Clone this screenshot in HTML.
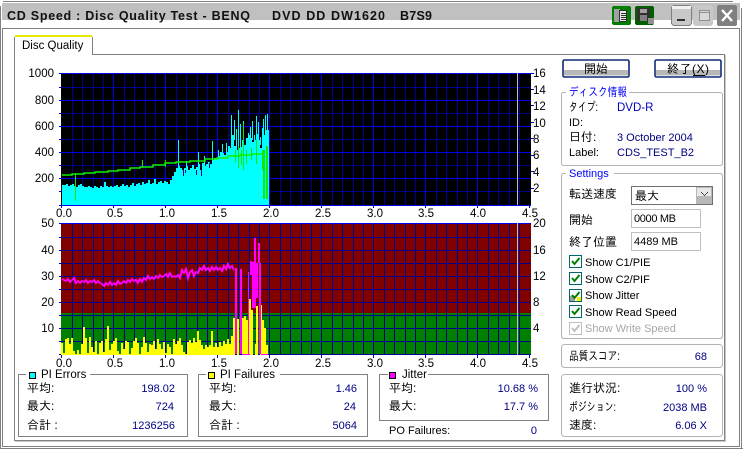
<!DOCTYPE html>
<html><head><meta charset="utf-8"><style>
html,body{margin:0;padding:0;background:#fff;width:743px;height:449px;overflow:hidden}
svg{display:block}
text{font-family:"Liberation Sans","IPAGothic","Noto Sans CJK JP",sans-serif;font-size:11px;fill:#000}
.j{font-size:12px}
.n{font-size:11.5px}
.v{fill:#000080}
.b{fill:#0000ff}
.g{fill:#a8a8a8}
.e{text-anchor:end}
.m{text-anchor:middle}
.t{font-family:"Liberation Sans",sans-serif;font-weight:bold;font-size:12.5px;fill:#111}
</style></head><body>
<svg width="743" height="449" viewBox="0 0 743 449" xmlns="http://www.w3.org/2000/svg">
<g shape-rendering="crispEdges">
<rect width="743" height="449" fill="#fff"/>
<!-- window frame -->
<path d="M3 1.5H733M0.5 6V449M741.5 8V449M1 448.5H743" stroke="#808080" fill="none"/>
<rect x="2" y="3" width="738" height="17" fill="#c0c0c0"/>
<path d="M2.5 28V447M2 28.5H740M739.5 28V447M2 446.5H740" stroke="#808080" fill="none"/>
<!-- tab panel -->
<path d="M14.5 54V440.5H724.5V54.5H92" stroke="#808080" fill="none"/>
<path d="M15 441.5H725.5V55" stroke="#c8c8c8" fill="none"/>
<path d="M14.5 54V37M92.5 37V54" stroke="#808080" fill="none"/>
<rect x="15" y="35" width="77" height="2" fill="#e8e800"/>
<rect x="15" y="37" width="77" height="18" fill="#fff"/>
<!-- top chart -->
<rect x="61" y="73" width="470" height="132" fill="#000"/>
<path d="M72.500 73V205M82.500 73V205M93.500 73V205M103.500 73V205M124.500 73V205M134.500 73V205M145.500 73V205M155.500 73V205M176.500 73V205M186.500 73V205M197.500 73V205M207.500 73V205M228.500 73V205M238.500 73V205M249.500 73V205M259.500 73V205M280.500 73V205M290.500 73V205M301.500 73V205M311.500 73V205M332.500 73V205M342.500 73V205M353.500 73V205M363.500 73V205M384.500 73V205M394.500 73V205M405.500 73V205M415.500 73V205M436.500 73V205M446.500 73V205M457.500 73V205M467.500 73V205M488.500 73V205M498.500 73V205M509.500 73V205M519.500 73V205M61 87.500H531M61 113.500H531M61 139.500H531M61 165.500H531M61 191.500H531" stroke="#000090" fill="none"/>
<path d="M113.500 73V205M165.500 73V205M217.500 73V205M269.500 73V205M321.500 73V205M373.500 73V205M425.500 73V205M477.500 73V205M61 73.500H531M61 100.500H531M61 126.500H531M61 152.500H531M61 178.500H531M61 205.500H531" stroke="#0000f0" fill="none"/>
<path d="M517.500 73V205" stroke="#c0c0c0"/>
<path d="M59 73.500H61M59 87.500H61M59 100.500H61M59 113.500H61M59 126.500H61M59 139.500H61M59 152.500H61M59 165.500H61M59 178.500H61M59 191.500H61M59 205.500H61M531 73.500H534M531 89.500H534M531 105.500H534M531 122.500H534M531 138.500H534M531 155.500H534M531 171.500H534M531 188.500H534M61.500 205V208M113.500 205V208M165.500 205V208M217.500 205V208M269.500 205V208M321.500 205V208M373.500 205V208M425.500 205V208M477.500 205V208M529.500 205V208" stroke="#0000c0" fill="none"/>
<!-- cyan bars -->
<path stroke="#00ffff" stroke-width="2" fill="none" d="M63 205V185M65 205V185M67 205V184M69 205V186M71 205V185M73 205V184M75 205V186M77 205V187M79 205V185M81 205V184M83 205V186M85 205V187M87 205V187M89 205V186M91 205V187M93 205V188M95 205V186M97 205V187M99 205V188M101 205V186M103 205V187M105 205V182M107 205V186M109 205V187M111 205V186M113 205V187M115 205V186M117 205V185M119 205V187M121 205V186M123 205V184M125 205V186M127 205V185M129 205V187M131 205V185M133 205V183M135 205V186M137 205V184M139 205V183M141 205V185M143 205V182M145 205V184M147 205V183M149 205V180M151 205V184M153 205V183M155 205V179M157 205V184M159 205V182M161 205V181M163 205V183M165 205V181M167 205V182M169 205V184M171 205V180M173 205V176M175 205V172M177 205V168M179 205V166M181 205V168M183 205V170M185 205V168M187 205V166M189 205V170M191 205V168M193 205V165M195 205V169M197 205V167M199 205V164M201 205V170M203 205V163M205 205V166M207 205V164M209 205V162M211 205V164M213 205V160M215 205V158M217 205V158M219 205V156M221 205V152M223 205V153M225 205V155M227 205V152M229 205V146M231 205V148M233 205V135M235 205V146M237 205V150M239 205V148M241 205V147M243 205V140M245 205V145M247 205V138M249 205V135M251 205V138M253 205V142M255 205V140M257 205V134M259 205V140M261 205V148M263 205V128M265 205V135M267 205V130"/>
<path stroke="#00ffff" fill="none" d="M178.500 166V140M186.500 170V161M198.500 170V152M204.500 166V156M212.500 160V141M218.500 158V150M222.500 155V144M226.500 155V143M231.500 150V115M234.500 140V120M236.500 150V129M238.500 150V110M240.500 150V124M243.500 145V121M246.500 145V140M248.500 140V133M250.500 140V127M252.500 140V121M254.500 140V135M256.500 140V116M258.500 140V122M260.500 145V137M263.500 130V119M265.500 135V115M267.500 130V114M268.500 205V130"/>
<path stroke="#0000a0" fill="none" d="M183.500 170V176M196.500 170V175M201.500 170V176M209.500 163V168M185.500 170V173"/>
</g>
<!-- green speed -->
<path stroke="#10f000" stroke-width="1.500" fill="none" d="M62 175H72V174H84V173H95V172H108V171H118V170H130V168H140V167H153V165H165V163H176V162H190V161H205V159H217V158H228V156H240V155H252V154H262"/>
<g shape-rendering="crispEdges">
<path stroke="#10e800" fill="none" d="M75.500 173V201M142.500 160V167M165.500 160V167M235.500 150V162M238.500 146V168M241.500 150V165M243.500 124V170M246.500 150V164M251.500 148V160M256.500 140V164M262.500 150V170"/>
<path stroke="#10e800" stroke-width="2" fill="none" d="M264 150V199M267 146V199"/>
<!-- bottom chart -->
<rect x="61" y="223" width="470" height="90" fill="#800000"/>
<rect x="61" y="313" width="470" height="42" fill="#008000"/>
<path d="M72.500 223V355M82.500 223V355M93.500 223V355M103.500 223V355M113.500 223V355M124.500 223V355M134.500 223V355M145.500 223V355M155.500 223V355M165.500 223V355M176.500 223V355M186.500 223V355M197.500 223V355M207.500 223V355M217.500 223V355M228.500 223V355M238.500 223V355M249.500 223V355M259.500 223V355M269.500 223V355M280.500 223V355M290.500 223V355M301.500 223V355M311.500 223V355M321.500 223V355M332.500 223V355M342.500 223V355M353.500 223V355M363.500 223V355M373.500 223V355M384.500 223V355M394.500 223V355M405.500 223V355M415.500 223V355M425.500 223V355M436.500 223V355M446.500 223V355M457.500 223V355M467.500 223V355M477.500 223V355M488.500 223V355M498.500 223V355M509.500 223V355M519.500 223V355M61 237.500H531M61 250.500H531M61 263.500H531M61 276.500H531M61 289.500H531M61 302.500H531M61 315.500H531M61 328.500H531M61 341.500H531M61 354.500H531" stroke="#000090" fill="none"/>
<path d="M61 223.500H531" stroke="#0000f0"/>
<path d="M517.500 223V355" stroke="#c0c0c0"/>
<path d="M59 223.500H61M59 237.500H61M59 250.500H61M59 263.500H61M59 276.500H61M59 289.500H61M59 302.500H61M59 315.500H61M59 328.500H61M59 341.500H61M59 354.500H61M61.500 355V358M113.500 355V358M165.500 355V358M217.500 355V358M269.500 355V358M321.500 355V358M373.500 355V358M425.500 355V358M477.500 355V358M529.500 355V358" stroke="#0000c0" fill="none"/>
<!-- yellow bars -->
<path stroke="#ffff00" stroke-width="2" fill="none" d="M62 355V343M64 355V353M66 355V339M68 355V338M70 355V344M72 355V338M74 355V351M76 355V354M78 355V350M80 355V354M82 355V344M84 355V327M86 355V338M88 355V353M90 355V337M92 355V347M94 355V352M96 355V341M98 355V354M100 355V343M102 355V341M104 355V352M106 355V339M108 355V326M110 355V350M112 355V344M114 355V341M116 355V338M118 355V351M120 355V354M122 355V343M124 355V349M126 355V341M128 355V342M130 355V354M132 355V348M134 355V341M136 355V338M138 355V343M140 355V354M142 355V347M144 355V337M146 355V343M148 355V352M150 355V344M152 355V345M154 355V341M156 355V349M158 355V339M160 355V344M162 355V349M164 355V342M166 355V353M168 355V344M170 355V347M172 355V354M174 355V339M176 355V344M178 355V341M180 355V338M182 355V345M184 355V352M186 355V354M188 355V342M190 355V340M192 355V343M194 355V338M196 355V342M198 355V331M200 355V340M202 355V345M204 355V349M206 355V345M208 355V347M210 355V345M212 355V331M214 355V347M216 355V343M218 355V347M220 355V342M222 355V346M224 355V341M226 355V344M228 355V339M230 355V344M232 355V336M234 355V318M238 355V319M243 355V318M245 355V316M247 355V320M250 355V299M252 355V310M256 355V344M257 355V306M261 355V305M263 355V320M265 355V328M267 355V345"/>
<!-- magenta -->
<polyline fill="none" stroke="#ff00ff" stroke-width="2" points="62,279 64,280 66,281 68,279 70,282 72,280 74,278 76,283 78,281 80,283 82,281 84,282 86,280 88,283 90,281 92,282 94,280 96,283 98,281 100,283 102,284 104,286 106,283 108,285 110,282 112,285 114,283 116,285 118,281 120,284 122,283 124,281 126,283 128,280 130,282 132,279 134,281 136,280 138,283 140,279 142,282 144,278 146,280 148,276 150,279 152,277 154,279 156,276 158,278 160,275 162,277 164,276 166,274 168,277 170,273 172,277 174,276 176,277 178,275 180,278 182,270 184,273 186,269 188,278 190,272 192,270 194,276 196,272 198,273 200,268 202,270 204,266 206,270 208,268 210,271 212,267 214,270 216,267 218,270 220,268 222,271 224,266 226,269 228,264 230,268 232,266 234,270"/>
<path fill="none" stroke="#ff00ff" stroke-width="2" d="M236 268V354M241 269V354M251 261V275M253 262V308M255 238V308M257 263V298M259 243V263M260 263V354"/>
<path fill="none" stroke="#ff00ff" d="M242 354.500H250M261 354.500H268M248.500 272V354"/>
<!-- group boxes bottom -->
<path d="M26 374.500H18.500V436.500H187.500V374.500H90" stroke="#808080" fill="none"/>
<rect x="29.500" y="372.500" width="6" height="6" fill="#00ffff" stroke="#000"/>
<path d="M206 374.500H198.500V436.500H367.500V374.500H280" stroke="#808080" fill="none"/>
<rect x="208.500" y="372.500" width="6" height="6" fill="#ffff00" stroke="#000"/>
<path d="M388 374.500H379.500V420.500H548.500V374.500H428" stroke="#808080" fill="none"/>
<rect x="389.500" y="372.500" width="6" height="6" fill="#ff00ff" stroke="#000"/>
</g>
<!-- buttons -->
<rect x="563" y="60" width="66" height="17" rx="1.500" fill="#fff" stroke="#102878" stroke-width="1.600"/>
<rect x="564" y="70" width="64" height="5.500" fill="#b8b8b8" shape-rendering="crispEdges"/>
<rect x="655" y="60" width="66" height="17" rx="1.500" fill="#fff" stroke="#102878" stroke-width="1.600"/>
<rect x="656" y="70" width="64" height="5.500" fill="#b8b8b8" shape-rendering="crispEdges"/>
<!-- right group boxes -->
<g fill="none" stroke="#b4b4b4">
<path d="M566 92.500H563Q561.500 92.500 561.500 95V163Q561.500 165.500 564 165.500H720Q722.500 165.500 722.500 163V95Q722.500 92.500 720 92.500H629"/>
<path d="M566 173.500H564Q561.500 173.500 561.500 176V336Q561.500 338.500 564 338.500H720Q722.500 338.500 722.500 336V176Q722.500 173.500 720 173.500H614"/>
<rect x="561.500" y="344.500" width="161" height="23" rx="3"/>
<rect x="561.500" y="374.500" width="161" height="62" rx="3"/>
</g>
<g shape-rendering="crispEdges">
<!-- combo / inputs -->
<rect x="631.500" y="186.500" width="81" height="18" fill="#fff" stroke="#707070"/>
<rect x="696" y="187" width="16" height="17" fill="#b8b8b8"/>
<rect x="697" y="188" width="14" height="8" fill="#e8e8e8"/>
<path d="M701 192h1v1h1v1h1v1h1v-1h1v-1h1v-1h1v1h-1v1h-1v1h-1v1h-1v-1h-1v-1h-1v-1h-1z" fill="#404040"/>
<rect x="631.500" y="209.500" width="69" height="18" fill="#fff" stroke="#c0c0c0"/>
<rect x="631.500" y="232.500" width="69" height="18" fill="#fff" stroke="#c0c0c0"/>
<!-- checkboxes -->
<rect x="569.500" y="255.500" width="12" height="12" fill="#fff" stroke="#006868"/>
<rect x="569.500" y="272.500" width="12" height="12" fill="#fff" stroke="#006868"/>
<rect x="569.500" y="289.500" width="12" height="12" fill="#fff" stroke="#006868"/>
<rect x="570" y="296" width="5" height="5" fill="#a0a0a0"/>
<rect x="577" y="297" width="4" height="4" fill="#f0f000"/>
<rect x="569.500" y="305.500" width="12" height="12" fill="#fff" stroke="#006868"/>
<rect x="569.500" y="322.500" width="12" height="12" fill="#fff" stroke="#c0c0c0"/>
</g>
<g fill="none" stroke-width="2">
<path d="M572 261l2.500 3 5-6" stroke="#008000"/>
<path d="M572 278l2.500 3 5-6" stroke="#008000"/>
<path d="M572 295l2.500 3 5-6" stroke="#008000"/>
<path d="M572 311l2.500 3 5-6" stroke="#008000"/>
<path d="M572 328l2.500 3 5-6" stroke="#c0c0c0"/>
</g>
<!-- title icons -->
<g shape-rendering="crispEdges">
<rect x="612" y="6" width="19" height="19" rx="2" fill="#008000"/>
<rect x="614" y="9" width="6" height="13" fill="#a0a0a0"/>
<rect x="619.500" y="10.500" width="7" height="11" fill="#e8e8e8" stroke="#303030"/>
<path d="M621 13.500h5M621 15.500h5M621 17.500h5M621 19.500h5" stroke="#303030"/>
<rect x="635" y="6" width="19" height="19" rx="2" fill="#006000"/>
<rect x="637" y="8" width="13" height="13" fill="#303030"/>
<rect x="640" y="9" width="7" height="4" fill="#a0a0a0"/>
<rect x="640" y="15" width="7" height="6" fill="#808080"/>
<rect x="648" y="18" width="6" height="6" fill="#909090"/>
<rect x="671.500" y="5.500" width="20" height="20" rx="3" fill="#c8c8c8" stroke="#808080"/>
<rect x="672" y="6" width="19" height="3" fill="#f0f0f0"/>
<rect x="677" y="19" width="8" height="2" fill="#303030"/>
<rect x="693" y="5" width="20" height="21" rx="3" fill="#c8c8c8"/>
<rect x="699.500" y="10.500" width="10" height="10" fill="#d8d8d8" stroke="#909090"/>
<path d="M699 12.500h11" stroke="#909090"/>
<rect x="717" y="5" width="20" height="21" rx="2" fill="#808080"/>
</g>
<path d="M722 10l10 11M732 10l-10 11" stroke="#fff" stroke-width="2.400"/>
<!-- title text -->
<text class="t" x="7" y="20" textLength="243" lengthAdjust="spacing">CD Speed : Disc Quality Test - BENQ</text>
<text class="t" x="272" y="20" textLength="113" lengthAdjust="spacing">DVD DD DW1620</text>
<text class="t" x="400" y="20" textLength="32" lengthAdjust="spacing">B7S9</text>
<text x="22" y="49" style="font-size:11.5px">Disc Quality</text>
<!-- axis labels -->
<g>
<text class="n e" x="54" y="77">1000</text>
<text class="n e" x="54" y="104">800</text>
<text class="n e" x="54" y="130">600</text>
<text class="n e" x="54" y="156">400</text>
<text class="n e" x="54" y="182">200</text>
<text class="n" x="533" y="77">16</text>
<text class="n" x="533" y="94">14</text>
<text class="n" x="533" y="110">12</text>
<text class="n" x="533" y="127">10</text>
<text class="n" x="533" y="143">8</text>
<text class="n" x="533" y="159">6</text>
<text class="n" x="533" y="176">4</text>
<text class="n" x="533" y="192">2</text>
<text class="n m" x="64" y="217">0.0</text>
<text class="n m" x="115" y="217">0.5</text>
<text class="n m" x="167" y="217">1.0</text>
<text class="n m" x="219" y="217">1.5</text>
<text class="n m" x="271" y="217">2.0</text>
<text class="n m" x="323" y="217">2.5</text>
<text class="n m" x="375" y="217">3.0</text>
<text class="n m" x="426" y="217">3.5</text>
<text class="n m" x="478" y="217">4.0</text>
<text class="n m" x="530" y="217">4.5</text>
<text class="n e" x="54" y="227">50</text>
<text class="n e" x="54" y="254">40</text>
<text class="n e" x="54" y="280">30</text>
<text class="n e" x="54" y="306">20</text>
<text class="n e" x="54" y="332">10</text>
<text class="n" x="533" y="227">20</text>
<text class="n" x="533" y="254">16</text>
<text class="n" x="533" y="280">12</text>
<text class="n" x="533" y="306">8</text>
<text class="n" x="533" y="332">4</text>
<text class="n m" x="64" y="367">0.0</text>
<text class="n m" x="115" y="367">0.5</text>
<text class="n m" x="167" y="367">1.0</text>
<text class="n m" x="219" y="367">1.5</text>
<text class="n m" x="271" y="367">2.0</text>
<text class="n m" x="323" y="367">2.5</text>
<text class="n m" x="375" y="367">3.0</text>
<text class="n m" x="426" y="367">3.5</text>
<text class="n m" x="478" y="367">4.0</text>
<text class="n m" x="530" y="367">4.5</text>
</g>
<!-- stat boxes -->
<text x="41" y="378" style="font-size:11.5px">PI Errors</text>
<text class="j" x="27" y="392">平均:</text><text class="v e" x="175" y="392">198.02</text>
<text class="j" x="27" y="410">最大:</text><text class="v e" x="174" y="410">724</text>
<text class="j" x="27" y="429">合計 :</text><text class="v e" x="175" y="429">1236256</text>
<text x="220" y="378" style="font-size:11.5px">PI Failures</text>
<text class="j" x="209" y="392">平均:</text><text class="v e" x="357" y="392">1.46</text>
<text class="j" x="209" y="410">最大:</text><text class="v e" x="356" y="410">24</text>
<text class="j" x="209" y="429">合計 :</text><text class="v e" x="357" y="429">5064</text>
<text x="402" y="378" style="font-size:11.5px">Jitter</text>
<text class="j" x="389" y="392">平均:</text><text class="v e" x="538" y="392">10.68 %</text>
<text class="j" x="389" y="410">最大:</text><text class="v e" x="538" y="410">17.7 %</text>
<text x="389" y="434">PO Failures:</text><text class="v e" x="537" y="434">0</text>
<!-- right panel -->
<text class="j m" x="596" y="73">開始</text>
<text class="j" x="667" y="73" textLength="42">終了(X)</text>
<path d="M693 75.500H705" stroke="#000" shape-rendering="crispEdges"/>
<text class="j b" x="569" y="96" textLength="58" lengthAdjust="spacingAndGlyphs">ディスク情報</text>
<text class="j" x="569" y="111" textLength="29" lengthAdjust="spacingAndGlyphs">タイプ:</text><text style="fill:#0000c0;font-size:11.5px" x="617" y="111">DVD-R</text>
<text x="569" y="126">ID:</text>
<text class="j" x="569" y="141">日付:</text><text class="v" x="617" y="141">3 October 2004</text>
<text x="569" y="156">Label:</text><text class="v" x="617" y="156">CDS_TEST_B2</text>
<text class="b" x="569" y="177">Settings</text>
<text class="j" x="569" y="198">転送速度</text>
<text class="j" x="635" y="200">最大</text>
<text class="j" x="569" y="224">開始</text>
<text x="634" y="222" textLength="42">0000 MB</text>
<text class="j" x="569" y="246">終了位置</text>
<text x="634" y="245" textLength="44">4489 MB</text>
<text x="585" y="266">Show C1/PIE</text>
<text x="585" y="283">Show C2/PIF</text>
<text x="585" y="299">Show Jitter</text>
<text x="585" y="316">Show Read Speed</text>
<text class="g" x="585" y="332">Show Write Speed</text>
<text class="j" x="569" y="360" textLength="51" lengthAdjust="spacingAndGlyphs">品質スコア:</text><text class="v e" x="707" y="360">68</text>
<text class="j" x="569" y="392">進行状況:</text><text class="v e" x="707" y="392">100 %</text>
<text class="j" x="569" y="411" textLength="47" lengthAdjust="spacingAndGlyphs">ポジション:</text><text class="v e" x="707" y="411">2038 MB</text>
<text class="j" x="569" y="429">速度:</text><text class="v e" x="707" y="429">6.06 X</text>
</svg>
</body></html>
